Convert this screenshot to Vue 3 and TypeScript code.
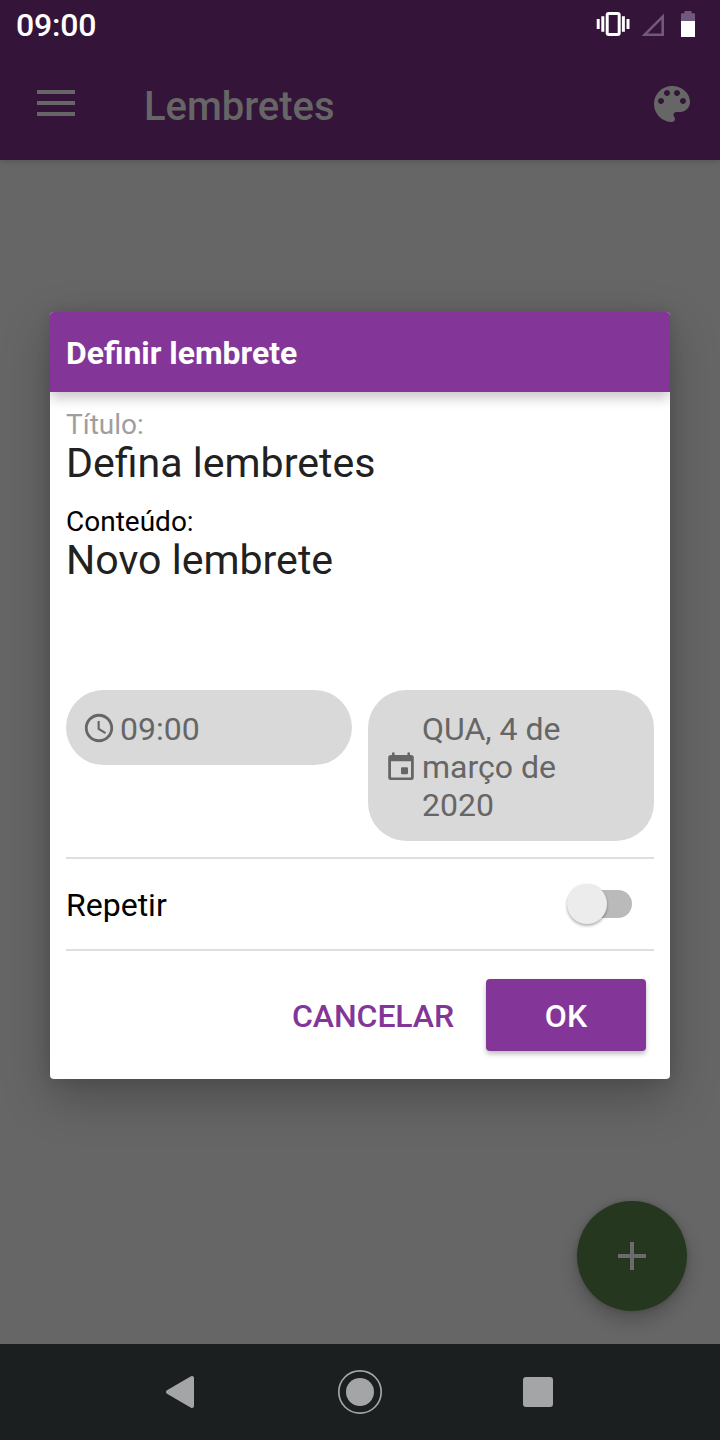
<script setup lang="ts">
import { ref } from 'vue'

interface Field {
  label: string
  value: string
  muted: boolean
}

const fields: Field[] = [
  { label: 'Título:', value: 'Defina lembretes', muted: true },
  { label: 'Conteúdo:', value: 'Novo lembrete', muted: false },
]
const time = '09:00'
const date = 'QUA, 4 de março de 2020'
const repeat = ref(false)
</script>

<template>
  <div class="screen">
    <header class="top">
      <div class="status">
        <span class="clock">{{ time }}</span>
        <svg class="status-icons" width="102" height="32" viewBox="594 8 102 32">
          <rect x="607.2" y="13.6" width="12" height="20.800" rx="1.5" fill="none" stroke="#fff" stroke-width="3" />
          <path d="M598.200 19v10M602.800 16.300v15.500M623.400 16.300v15.500M628 19v10" stroke="#fff" stroke-width="3" />
          <path d="M662.700 16.700v18h-18z" fill="none" stroke="#71597b" stroke-width="2.600" />
          <path d="M684.500 11h7v2.300h2.500q1 0 1 1V22h-14v-7.700q0-1 1-1h2.500z" fill="#71597b" />
          <path d="M681 21h14v16h-14z" fill="#fff" />
        </svg>
      </div>
      <div class="bar">
        <svg class="menu" width="38" height="26" viewBox="0 0 38 26">
          <path d="M0 2h38M0 13h38M0 24h38" stroke="#666" stroke-width="4" />
        </svg>
        <h1>Lembretes</h1>
        <svg class="palette" width="48" height="48" viewBox="0 0 24 24">
          <path fill="#666" d="M12 3c-4.970 0-9 4.030-9 9s4.030 9 9 9c.83 0 1.500-.67 1.500-1.500 0-.39-.15-.74-.39-1.010-.23-.26-.38-.61-.38-.99 0-.83.67-1.500 1.500-1.500H16c2.760 0 5-2.240 5-5 0-4.420-4.030-8-9-8zm-5.500 9c-.83 0-1.500-.67-1.500-1.500S5.670 9 6.500 9 8 9.670 8 10.500 7.330 12 6.500 12zm3-4C8.670 8 8 7.330 8 6.500S8.670 5 9.500 5s1.500.67 1.500 1.500S10.330 8 9.500 8zm5 0c-.83 0-1.500-.67-1.500-1.500S13.670 5 14.500 5s1.500.67 1.500 1.500S15.330 8 14.500 8zm3 4c-.83 0-1.500-.67-1.500-1.500S16.670 9 17.500 9s1.500.67 1.500 1.500-.67 1.500-1.500 1.500z" />
        </svg>
      </div>
    </header>

    <main class="page">
      <section class="dialog">
        <h2>Definir lembrete</h2>
        <div class="body">
          <div v-for="f in fields" :key="f.label" class="field">
            <div class="label" :class="{ muted: f.muted }">{{ f.label }}</div>
            <div class="value">{{ f.value }}</div>
          </div>
          <div class="pills">
            <div class="pill time">
              <svg width="34" height="34" viewBox="0 0 24 24" fill="#666">
                <path d="M11.990 2C6.470 2 2 6.480 2 12s4.470 10 9.990 10C17.520 22 22 17.520 22 12S17.520 2 11.990 2zM12 20c-4.420 0-8-3.580-8-8s3.580-8 8-8 8 3.580 8 8-3.580 8-8 8zm.5-13H11v6l5.250 3.150.75-1.230-4.500-2.670z" />
              </svg>
              <span>{{ time }}</span>
            </div>
            <div class="pill date">
              <svg width="34" height="34" viewBox="0 0 34 34" fill="#666">
                <path fill-rule="evenodd" d="M8 3.500a1.300 1.300 0 0 1 2.600 0V5h12.800V3.500a1.300 1.300 0 0 1 2.600 0V5h1a2.800 2.800 0 0 1 2.800 2.800v19.400a2.800 2.800 0 0 1-2.800 2.800H7a2.800 2.800 0 0 1-2.800-2.800V7.800A2.800 2.800 0 0 1 7 5h1zM7 11.200V26.400q0 1.200 1.200 1.200h17.600q1.200 0 1.200-1.200V11.200z" />
                <rect x="17" y="17.300" width="7" height="7" rx="1.200" />
              </svg>
              <span>{{ date }}</span>
            </div>
          </div>
          <div class="repeat">
            <span>Repetir</span>
            <button class="switch" :class="{ on: repeat }" role="switch" :aria-checked="repeat" @click="repeat = !repeat">
              <i class="thumb"></i>
            </button>
          </div>
          <div class="actions">
            <button class="cancel">CANCELAR</button>
            <button class="ok">OK</button>
          </div>
        </div>
      </section>
      <button class="fab">
        <svg width="28" height="28" viewBox="0 0 28 28">
          <path d="M14 0v28M0 14h28" stroke="#6b6b6b" stroke-width="4" />
        </svg>
      </button>
    </main>

    <nav class="nav">
      <svg width="720" height="96" viewBox="0 0 720 96">
        <path d="M168 48L192 34V62z" fill="#a4a5a7" stroke="#a4a5a7" stroke-width="4" stroke-linejoin="round" />
        <circle cx="360" cy="48" r="21.200" fill="none" stroke="#a4a5a7" stroke-width="1.700" />
        <circle cx="360" cy="48" r="14" fill="#a4a5a7" />
        <rect x="523" y="33" width="30" height="30" rx="3" fill="#a4a5a7" />
      </svg>
    </nav>
  </div>
</template>

<style>
body {
  margin: 0;
}
</style>

<style scoped>
.screen {
  width: 720px;
  height: 1440px;
  display: flex;
  flex-direction: column;
  overflow: hidden;
  background: #666;
  font-family: Roboto, "Noto Sans", sans-serif;
}
button {
  border: 0;
  padding: 0;
  font: inherit;
}
svg {
  display: block;
  flex: none;
}
.top {
  flex: none;
  height: 160px;
  background: #341539;
  box-shadow: 0 2px 6px rgba(0, 0, 0, 0.14);
}
.status {
  display: flex;
  justify-content: space-between;
  height: 48px;
  padding: 0 24px 0 16px;
}
.clock {
  font-size: 32px;
  font-weight: 500;
  line-height: 50px;
  letter-spacing: -0.2px;
  color: #fff;
}
.status-icons {
  margin-top: 8px;
}
.bar {
  display: flex;
  align-items: center;
  height: 112px;
  padding: 0 24px 0 37px;
}
.menu {
  margin-bottom: 2px;
}
.bar h1 {
  flex: 1;
  margin: 6px 0 0 69px;
  font-size: 40px;
  font-weight: 500;
  line-height: 48px;
  letter-spacing: -0.05px;
  color: #666;
}
.page {
  flex: 1;
  display: flex;
  flex-direction: column;
  padding: 152px 50px 0;
}
.dialog {
  flex: none;
  height: 767px;
  border-radius: 4px;
  overflow: hidden;
  background: #fff;
  box-shadow: 0 18px 48px rgba(0, 0, 0, 0.26), 0 0 14px rgba(0, 0, 0, 0.12);
}
.dialog h2 {
  position: relative;
  margin: 0;
  height: 80px;
  padding-left: 16px;
  font-size: 31.9px;
  font-weight: 700;
  line-height: 82px;
  color: #fff;
  background: #833698;
  box-shadow: 0 6px 12px rgba(0, 0, 0, 0.22);
}
.body {
  padding: 18px 16px 0;
}
.field {
  margin-bottom: 21px;
}
.label {
  font-size: 28px;
  line-height: 30px;
  color: #000;
}
.label.muted {
  color: #9e9e9e;
}
.value {
  font-size: 41.1px;
  line-height: 46px;
  color: #212121;
}
.pills {
  display: flex;
  gap: 16px;
  align-items: flex-start;
  margin-top: 107px;
}
.pill {
  flex: 1;
  box-sizing: border-box;
  display: flex;
  align-items: center;
  padding: 20px 16px 17px;
  border-radius: 38px;
  background: #d9d9d9;
  color: #666;
  font-size: 32px;
  line-height: 38px;
}
.pill svg {
  margin-bottom: 2px;
}
.pill.date svg {
  margin-bottom: 0;
}
.pill span {
  margin-left: 4px;
}
.pill.date span {
  width: 160px;
}
.repeat {
  display: flex;
  align-items: center;
  justify-content: space-between;
  height: 90px;
  margin-top: 16px;
  padding-right: 22px;
  border-top: 2px solid #dedede;
  border-bottom: 2px solid #dedede;
  font-size: 32px;
  color: #000;
}
.repeat span {
  padding-top: 2px;
}
.switch {
  width: 65px;
  height: 28px;
  display: flex;
  align-items: center;
  border-radius: 14px;
  background: linear-gradient(90deg, transparent 20px, #bababa 20px);
}
.switch.on {
  justify-content: flex-end;
}
.thumb {
  width: 40px;
  height: 40px;
  border-radius: 50%;
  background: #ececec;
  box-shadow: 0 2px 3px rgba(0, 0, 0, 0.28), 0 0 2px rgba(0, 0, 0, 0.1);
}
.actions {
  display: flex;
  justify-content: flex-end;
  margin-top: 28px;
  padding-right: 8px;
}
.actions button {
  height: 72px;
  font-size: 32px;
  font-weight: 500;
  line-height: 74px;
}
.actions .cancel {
  margin-right: 32px;
  background: none;
  color: #833698;
  letter-spacing: -0.1px;
}
.ok {
  width: 160px;
  border-radius: 4px;
  background: #833698;
  color: #fff;
  box-shadow: 0 3px 5px rgba(0, 0, 0, 0.26);
}
.fab {
  align-self: flex-end;
  display: flex;
  align-items: center;
  justify-content: center;
  width: 110px;
  height: 110px;
  margin: 122px -17px 0 0;
  border-radius: 50%;
  background: #263720;
  box-shadow: 0 9px 18px rgba(0, 0, 0, 0.22), 0 0 5px rgba(0, 0, 0, 0.16);
}
.nav {
  flex: none;
  height: 96px;
  background: #1c1f20;
}
</style>
